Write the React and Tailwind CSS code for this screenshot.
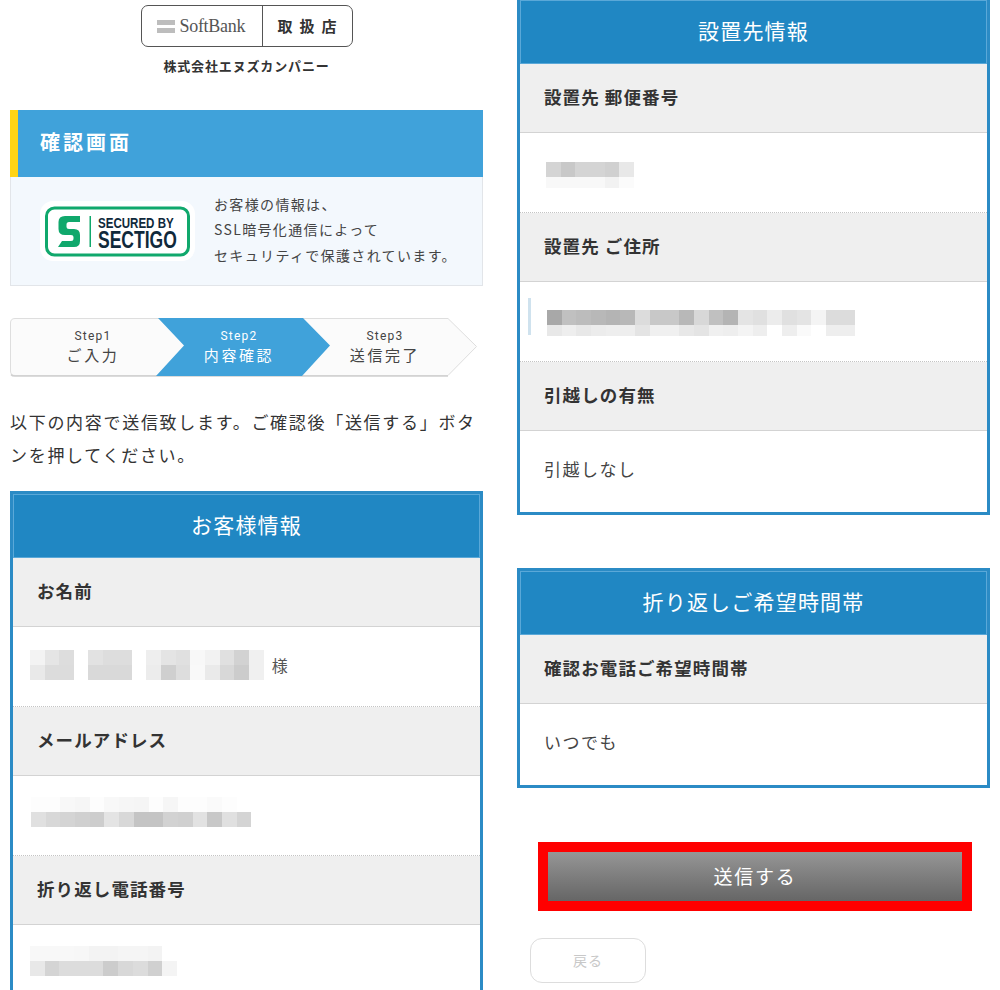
const jp = { fontFamily: '"Noto Sans CJK JP", "Noto Sans", sans-serif' };

function Mosaic({ rows, short, className = '' }) {
  return (
    <div className={`flex flex-col ${className}`}>
      {rows.map((row, i) => (
        <div key={i} className={`flex ${short && i === 1 ? 'h-[11px]' : 'h-[15px]'}`}>
          {row.map((c, j) => (
            <div key={j} className="h-full w-[14.7px]" style={{ background: c ? `#${c}${c}${c}` : 'transparent' }} />
          ))}
        </div>
      ))}
    </div>
  );
}

function Label({ children }) {
  return (
    <div className="flex h-[69px] items-center border-b border-[#d3d3d3] bg-[#efefef] pb-[2px] pl-[24px] text-[17.5px] font-bold tracking-[1.1px] text-[#333]">
      {children}
    </div>
  );
}

function Value({ children, last }) {
  return (
    <div className={`flex items-center pl-[24px] text-[17px] tracking-[1.5px] text-[#444] ${last ? 'h-[81px] pb-[5px]' : 'h-[80px] border-b border-dotted border-[#c4c4c4]'}`}>
      {children}
    </div>
  );
}

function Card({ title, className = '', children }) {
  return (
    <section className={`border-[3px] border-[#2b8bc5] bg-white ${className}`}>
      <h2 className="flex h-[64px] items-center justify-center bg-[#2087c3] pb-[2px] text-[21px] font-normal tracking-[1.2px] text-white shadow-[inset_0_0_0_1px_#5aa8d8]">
        {title}
      </h2>
      {children}
    </section>
  );
}

function SoftBankBadge() {
  return (
    <div className="mx-auto mt-[5px] flex h-[42px] w-[212px] items-center rounded-[7px] border border-[#555]">
      <div className="flex h-full w-[121px] items-center gap-[5px] border-r border-[#555] pl-[15px]">
        <div className="flex w-[18px] flex-col gap-[3px]">
          <div className="h-[5px] bg-[#bdbdbd]" />
          <div className="h-[5px] bg-[#bdbdbd]" />
        </div>
        <span className="text-[18px] tracking-[-0.3px] text-[#555]" style={{ fontFamily: '"Liberation Serif", serif' }}>SoftBank</span>
      </div>
      <div className="flex-1 pl-[7px] text-center text-[15px] font-bold tracking-[7px] text-[#333]">取扱店</div>
    </div>
  );
}

function SectigoLogo() {
  return (
    <svg width="155" height="60" viewBox="0 0 155 60" className="shrink-0">
      <rect x="0" y="0" width="155" height="60" rx="13" fill="#fff" />
      <rect x="6.5" y="7" width="142" height="47" rx="8" fill="#fff" stroke="#10a86c" strokeWidth="3" />
      <path
        d="M25 15 H40 V21 H29 Q26.5 21 26.5 23.5 V26 Q26.5 28 29 28 H34 Q40 28 40 34 V40 Q40 46 34 46 H18 L22 40 H31 Q33.5 40 33.5 37.5 V36 Q33.5 34 31 34 H25 Q18.5 34 18.5 28 V21 Q18.5 15 25 15 Z"
        fill="#10a86c"
      />
      <rect x="49.5" y="15" width="1.5" height="31" fill="#10a86c" />
      <text transform="translate(58 26.5) scale(0.77 1)" fontFamily="Liberation Sans, sans-serif" fontWeight="700" fontSize="15" fill="#10293b">SECURED BY</text>
      <text transform="translate(58 46.5) scale(0.745 1)" fontFamily="Liberation Sans, sans-serif" fontWeight="700" fontSize="23.5" fill="#10293b">SECTIGO</text>
    </svg>
  );
}

function Steps() {
  const steps = [
    ['Step1', 'ご入力', 'text-[#444]'],
    ['Step2', '内容確認', 'text-white'],
    ['Step3', '送信完了', 'text-[#444]'],
  ];
  return (
    <div className="relative mt-[32px] h-[59px] w-[468px]">
      <svg width="468" height="59" viewBox="0 0 468 59" className="absolute left-0 top-0">
        <path d="M5 .5 H438 L466.5 28.5 L438 57.5 H5 Q.5 57.5 .5 53 V5 Q.5 .5 5 .5 Z" fill="#fbfbfb" stroke="#dedede" />
        <path d="M1 56.5 Q2 58 5 58 H438" fill="none" stroke="#cfcfcf" strokeWidth="1.5" />
        <path d="M148 0 H293 L320 27.5 L292 58 H146 L174 27.5 Z" fill="#40a2da" />
      </svg>
      <div className="relative grid h-full grid-cols-[146px_146px_146px] pl-[10px]">
        {steps.map(([step, name, color]) => (
          <div key={step} className={`flex flex-col items-center pt-[10px] ${color}`}>
            <span className="text-[12px] leading-[16px] tracking-[1.2px]" style={{ fontFamily: 'Roboto, sans-serif' }}>{step}</span>
            <span className="text-[15px] leading-[22px] tracking-[2.6px]">{name}</span>
          </div>
        ))}
      </div>
    </div>
  );
}

export default function App() {
  return (
    <div className="flex h-[990px] w-[1000px] overflow-hidden bg-white" style={jp}>
      <div className="ml-[10px] w-[473px] shrink-0">
        <SoftBankBadge />
        <p className="mt-[9px] text-center text-[13px] font-bold leading-[20px] tracking-[0.85px] text-[#333]">株式会社エヌズカンパニー</p>
        <div className="mt-[34px] flex h-[67px] items-center border-l-[8px] border-[#ffd414] bg-[#40a2da] pb-[4px] pl-[22px] text-[20px] font-bold tracking-[3px] text-white">
          確認画面
        </div>
        <div className="flex h-[109px] items-center gap-[19px] border border-t-0 border-[#e2e5e9] bg-[#f3f8fd] pl-[29px]">
          <SectigoLogo />
          <p className="pb-[2px] text-[14px] leading-[25.5px] tracking-[1.35px] text-[#444]">
            お客様の情報は、<br />SSL暗号化通信によって<br />セキュリティで保護されています。
          </p>
        </div>
        <Steps />
        <p className="mt-[28px] text-[17px] leading-[33px] tracking-[1.7px] text-[#333]">
          以下の内容で送信致します。ご確認後「送信する」ボタンを押してください。
        </p>
        <Card title="お客様情報" className="mt-[20px]">
          <Label>お名前</Label>
          <Value>
            <div className="-ml-[7px] -mt-[3px] flex items-center gap-[14px]">
              <Mosaic rows={[['f3', 'e5', 'dd'], ['e9', 'dc', 'dc']]} />
              <Mosaic rows={[['e2', 'dd', 'dd'], ['d9', 'd9', 'd9']]} />
              <Mosaic rows={[['ee', 'e4', 'e0', 'f8', 'f2', 'e0', 'd2', 'f0'], ['ec', 'cf', 'dd', 'f9', 'ea', 'd8', 'cc', 'f0']]} />
              <span className="-ml-[6px] text-[16px] text-[#555]">様</span>
            </div>
          </Value>
          <Label>メールアドレス</Label>
          <Value>
            <Mosaic
              className="-ml-[6px] -mt-[7px]"
              rows={[
                ['fd', 'fd', 'f8', 'f6', 'fd', 'f8', 'f6', 'f5', 'fd', 'f6', 'fd', 'fd', 'fa', 'fd', 'ff'],
                ['e0', 'd8', 'd4', 'd0', 'cd', 'e4', 'd8', 'c4', 'c4', 'd2', 'd0', 'e2', 'c8', 'e0', 'd4'],
              ]}
            />
          </Value>
          <Label>折り返し電話番号</Label>
          <Value>
            <Mosaic
              className="-ml-[7px] -mt-[7px]"
              rows={[
                ['f8', 'f8', 'f8', 'f7', 'f3', 'f3', 'f5', 'f5', 'f3', 'ff'],
                ['e8', 'd4', 'dc', 'dc', 'dc', 'cc', 'd8', 'dc', 'd0', 'f4'],
              ]}
            />
          </Value>
        </Card>
      </div>

      <div className="ml-[34px] w-[473px] shrink-0">
        <Card title="設置先情報" className="-mt-[3px]">
          <Label>設置先 郵便番号</Label>
          <Value>
            <Mosaic
              short
              className="ml-[2px] mt-[5px]"
              rows={[
                ['d4', 'c8', 'd4', 'd4', 'd0', 'e8'],
                ['f8', 'f8', 'f8', 'f8', 'f2', 'fb'],
              ]}
            />
          </Value>
          <Label>設置先 ご住所</Label>
          <Value>
            <div className="-ml-[16px] -mt-[10px] flex items-start gap-[16px]">
              <div className="h-[37px] w-[3px] bg-[#cfe2ee]" />
              <Mosaic
                short
                className="mt-[12px]"
                rows={[
                  ['a8', 'c0', 'bc', 'b8', 'b4', 'b8', 'dc', 'c8', 'c8', 'b8', 'd8', 'c0', 'b4', 'e4', 'e0', 'ec', 'e0', 'e4', 'f4', 'dc', 'dc'],
                  ['e8', 'ee', 'e8', 'ec', 'ee', 'ee', 'e4', 'f0', 'f0', 'e8', 'e4', 'f0', 'ee', 'f4', 'ee', 'ff', 'ee', 'fa', 'ff', 'ee', 'ee'],
                ]}
              />
            </div>
          </Value>
          <Label>引越しの有無</Label>
          <Value last>引越しなし</Value>
        </Card>

        <Card title="折り返しご希望時間帯" className="mt-[53px]">
          <Label>確認お電話ご希望時間帯</Label>
          <Value last>いつでも</Value>
        </Card>

        <button className="ml-[21px] mt-[54px] block h-[69px] w-[434px] border-[10px] border-[#ff0000] bg-gradient-to-b from-[#969696] to-[#666] text-[19px] tracking-[1.8px] text-white">
          送信する
        </button>
        <button className="ml-[13px] mt-[27px] block h-[45px] w-[116px] rounded-[12px] border border-[#ddd] bg-white text-[14px] tracking-[1px] text-[#c8c8c8]">
          戻る
        </button>
      </div>
    </div>
  );
}
